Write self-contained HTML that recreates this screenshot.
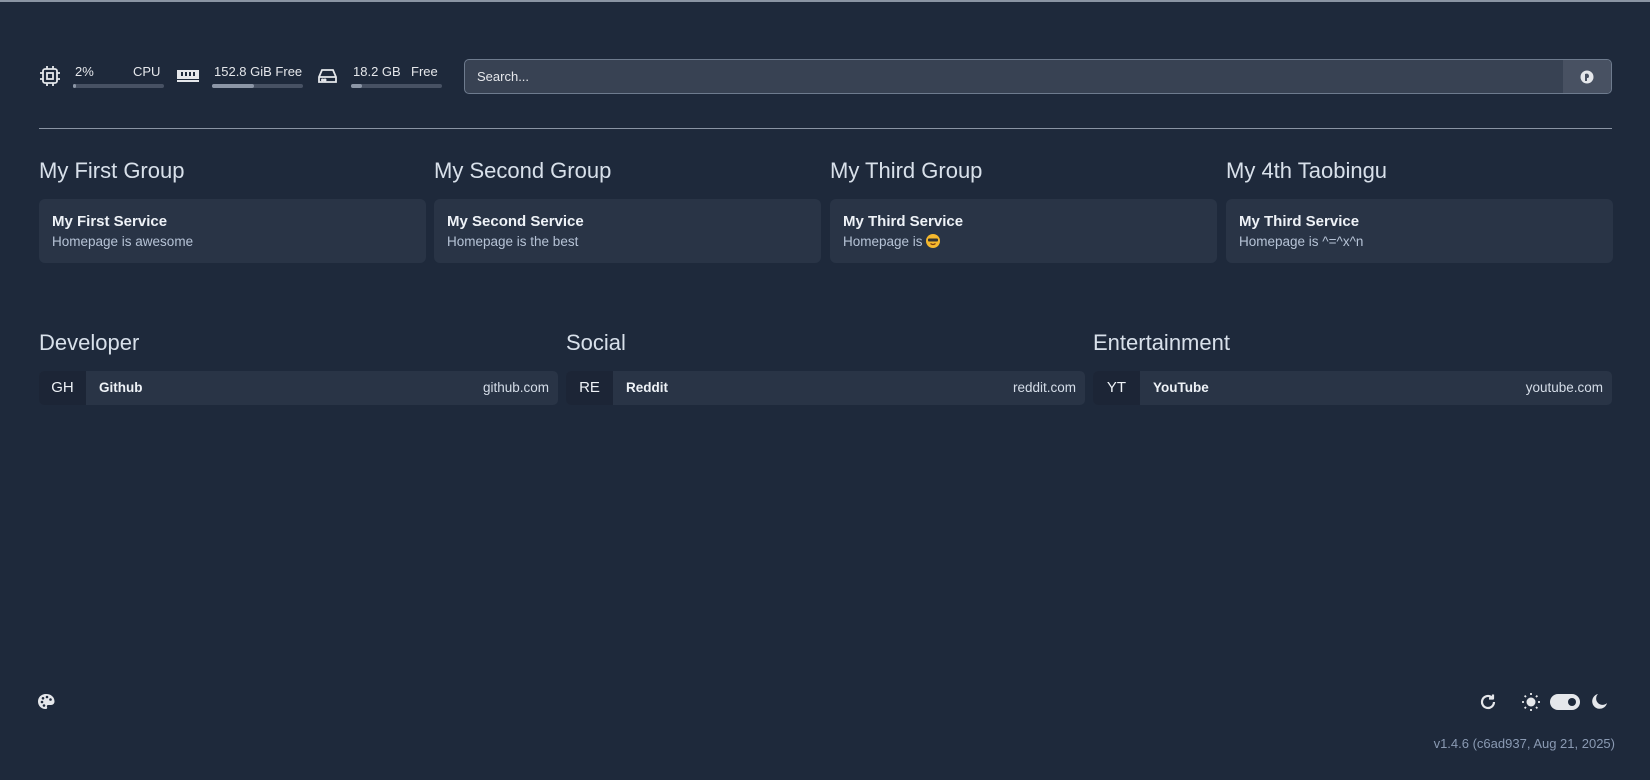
<!DOCTYPE html>
<html><head><meta charset="utf-8"><style>
*{box-sizing:border-box;margin:0;padding:0}
body{width:1650px;height:780px;background:#1e293b;font-family:"Liberation Sans",sans-serif;color:#e2e8f0;position:relative;overflow:hidden;border-top:2px solid #8a94a3}
.abs{position:absolute}
.stat{position:absolute;top:62px;font-size:13px;color:#e5e7eb}
.bar{position:absolute;top:82px;height:4px;border-radius:2px;background:#475163}
.bar i{display:block;height:4px;border-radius:2px;background:#8c96a6}
.gt{position:absolute;top:156px;font-size:22px;color:#d8e0ea}
.card{position:absolute;top:197px;width:387px;height:64px;background:#293446;border-radius:6px;padding:14px 13px}
.card b{display:block;font-size:15px;font-weight:600;color:#eef2f7;line-height:18px}
.card span.d{display:block;font-size:13.5px;color:#b6c3d6;margin-top:2px;line-height:17px}
.bt{position:absolute;top:328px;font-size:22px;color:#d8e0ea}
.bm{position:absolute;top:369px;width:519px;height:34px;border-radius:5px;background:#293446;overflow:hidden;font-size:13.5px}
.bm .ab{position:absolute;left:0;top:0;width:47px;height:34px;background:#1c2536;text-align:center;line-height:34px;font-size:15px;color:#eef2f7}
.bm .nm{position:absolute;left:60px;top:9px;font-weight:600;color:#eef2f7}
.bm .url{position:absolute;right:9px;top:9px;color:#d5dde8}
</style></head><body>
<svg class="abs" style="left:39px;top:63px" width="22" height="22" viewBox="0 0 22 22" fill="none" stroke="#e5e7eb" stroke-width="1.8"><rect x="4" y="4" width="14" height="14" rx="2"/><rect x="8" y="8" width="6" height="6"/><path d="M8 1v3M14 1v3M8 18v3M14 18v3M1 8h3M1 14h3M18 8h3M18 14h3"/></svg>
<div class="stat" style="left:75px">2%</div><div class="stat" style="left:133px">CPU</div>
<div class="bar" style="left:73px;width:91px"><i style="width:3px"></i></div>
<svg class="abs" style="left:177px;top:66px" width="22" height="16" viewBox="0 0 22 16"><rect x="0" y="2" width="22" height="9" fill="#e5e7eb"/><rect x="4" y="4" width="2" height="4" fill="#1e293b"/><rect x="8" y="4" width="2" height="4" fill="#1e293b"/><rect x="12" y="4" width="2" height="4" fill="#1e293b"/><rect x="16" y="4" width="2" height="4" fill="#1e293b"/><rect x="0" y="12" width="22" height="2" fill="#e5e7eb"/></svg>
<div class="stat" style="left:214px">152.8 GiB Free</div>
<div class="bar" style="left:212px;width:91px"><i style="width:42px"></i></div>
<svg class="abs" style="left:317px;top:64px" width="21" height="20" viewBox="0 0 21 20" fill="none" stroke="#e5e7eb" stroke-width="1.8"><path d="M2 11l3-7h11l3 7v5H2z M2 11h17"/><circle cx="5.5" cy="14" r=".6" fill="#e5e7eb"/><circle cx="8" cy="14" r=".6" fill="#e5e7eb"/></svg>
<div class="stat" style="left:353px">18.2 GB</div><div class="stat" style="left:411px">Free</div>
<div class="bar" style="left:351px;width:91px"><i style="width:11px"></i></div>
<div class="abs" style="left:464px;top:57px;width:1148px;height:35px;background:#384253;border:1px solid #6e7b8e;border-radius:5px;overflow:hidden">
<div style="position:absolute;left:12px;top:9px;font-size:13px;color:#e5e7eb">Search...</div>
<div style="position:absolute;right:0;top:0;width:48px;height:35px;background:#485162"></div>
<svg style="position:absolute;right:17px;top:10px" width="14" height="14" viewBox="0 0 14 14"><circle cx="7" cy="7" r="6.5" fill="#e5e7eb"/><path d="M5 4c2-1 4 0 4 2s-1 2-2 2l0 3-2 0z" fill="#485162"/></svg>
</div>
<div class="abs" style="left:39px;top:126px;width:1573px;height:1px;background:#8a94a3"></div>

<div class="gt" style="left:39px">My First Group</div>
<div class="gt" style="left:434px">My Second Group</div>
<div class="gt" style="left:830px">My Third Group</div>
<div class="gt" style="left:1226px">My 4th Taobingu</div>
<div class="card" style="left:39px"><b>My First Service</b><span class="d">Homepage is awesome</span></div>
<div class="card" style="left:434px"><b>My Second Service</b><span class="d">Homepage is the best</span></div>
<div class="card" style="left:830px"><b>My Third Service</b><span class="d">Homepage is <svg width="14" height="14" viewBox="0 0 14 14" style="vertical-align:-2px"><circle cx="7" cy="7" r="7" fill="#f5b82e"/><rect x="2" y="4.5" width="10" height="3" rx="1" fill="#333"/><path d="M4.5 9.5q2.5 2 5 0" stroke="#7a3a10" stroke-width="1.2" fill="none"/></svg></span></div>
<div class="card" style="left:1226px"><b>My Third Service</b><span class="d">Homepage is ^=^x^n</span></div>

<div class="bt" style="left:39px">Developer</div>
<div class="bt" style="left:566px">Social</div>
<div class="bt" style="left:1093px">Entertainment</div>
<div class="bm" style="left:39px"><div class="ab">GH</div><div class="nm">Github</div><div class="url">github.com</div></div>
<div class="bm" style="left:566px"><div class="ab">RE</div><div class="nm">Reddit</div><div class="url">reddit.com</div></div>
<div class="bm" style="left:1093px"><div class="ab">YT</div><div class="nm">YouTube</div><div class="url">youtube.com</div></div>

<svg class="abs" style="left:37px;top:691px" width="18" height="17" viewBox="0 0 18 17"><path d="M9 1C4 1 1 4.5 1 8.5S4 16 8.5 16c1.5 0 2-1 1.5-2s0-2 1.5-2H14c2 0 3.5-1.5 3.5-3.5C17.5 4 14 1 9 1z" fill="#e5e7eb"/><circle cx="5" cy="9" r="1.3" fill="#1e293b"/><circle cx="6" cy="5.3" r="1.3" fill="#1e293b"/><circle cx="10" cy="4" r="1.3" fill="#1e293b"/><circle cx="13.5" cy="6.5" r="1.3" fill="#1e293b"/><circle cx="7" cy="12.5" r="1.3" fill="#1e293b"/></svg>
<svg class="abs" style="left:1479px;top:691px" width="18" height="18" viewBox="0 0 18 18" fill="none" stroke="#e5e7eb" stroke-width="2.2"><path d="M15 9a6 6 0 1 1-2-4.5"/><path d="M14 1.5v4h-4" stroke-linejoin="round"/></svg>
<svg class="abs" style="left:1521px;top:690px" width="20" height="20" viewBox="0 0 20 20" fill="#e5e7eb" stroke="#e5e7eb" stroke-width="1.8"><circle cx="10" cy="10" r="4.5" stroke="none"/><path d="M10 1v2M10 17v2M1 10h2M17 10h2M3.6 3.6l1.4 1.4M15 15l1.4 1.4M3.6 16.4L5 15M15 5l1.4-1.4"/></svg>
<div class="abs" style="left:1550px;top:692px;width:30px;height:16px;border-radius:8px;background:#e5e7eb"></div>
<div class="abs" style="left:1568px;top:696px;width:8px;height:8px;border-radius:4px;background:#1e293b"></div>
<svg class="abs" style="left:1591px;top:691px" width="17" height="17" viewBox="0 0 17 17"><path d="M7 1a7.5 7.5 0 1 0 9 9A6 6 0 0 1 7 1z" fill="#e5e7eb"/></svg>
<div class="abs" style="right:35px;top:734px;font-size:13px;color:#8a9ab3">v1.4.6 (c6ad937, Aug 21, 2025)</div>
</body></html>
